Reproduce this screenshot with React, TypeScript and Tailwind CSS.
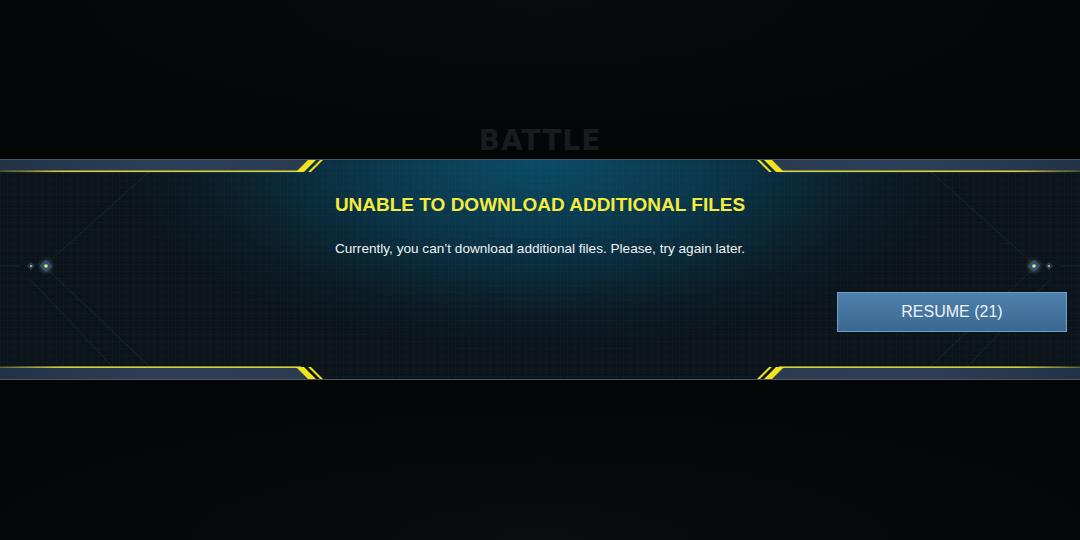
function PanelFrame() {
  return (
    <svg className="absolute inset-0 h-full w-full" viewBox="0 0 1080 221" preserveAspectRatio="none">
      <defs>
        <linearGradient id="bandL" x1="0" x2="1" y1="0" y2="0">
          <stop offset="0" stopColor="#223247" />
          <stop offset="0.5" stopColor="#2d3f57" />
          <stop offset="1" stopColor="#2a3b52" />
        </linearGradient>
        <linearGradient id="bandR" x1="1" x2="0" y1="0" y2="0">
          <stop offset="0" stopColor="#223247" />
          <stop offset="0.5" stopColor="#2d3f57" />
          <stop offset="1" stopColor="#2a3b52" />
        </linearGradient>
        <linearGradient id="lineL" x1="0" x2="1" y1="0" y2="0">
          <stop offset="0" stopColor="#c9c640" stopOpacity="0.35" />
          <stop offset="0.2" stopColor="#d3cf3c" />
          <stop offset="1" stopColor="#d9d43a" />
        </linearGradient>
        <linearGradient id="lineR" x1="1" x2="0" y1="0" y2="0">
          <stop offset="0" stopColor="#c9c640" stopOpacity="0.35" />
          <stop offset="0.2" stopColor="#d3cf3c" />
          <stop offset="1" stopColor="#d9d43a" />
        </linearGradient>
        <radialGradient id="glow">
          <stop offset="0" stopColor="#d8ff80" stopOpacity="0.5" />
          <stop offset="1" stopColor="#5070a0" stopOpacity="0" />
        </radialGradient>
      </defs>

      {/* faint circuit lines */}
      <g stroke="#7fa6bd" strokeOpacity="0.11" strokeWidth="1" fill="none">
        <path d="M150 12 L44 107 L150 208" />
        <path d="M930 12 L1036 107 L930 208" />
        <path d="M0 107 L20 107" />
        <path d="M1060 107 L1080 107" />
        <path d="M1050 120 L955 221" />
        <path d="M30 120 L125 221" />
      </g>

      {/* top edge */}
      <line x1="0" y1="0.5" x2="1080" y2="0.5" stroke="#3f5866" strokeWidth="1" />
      {/* bottom edge */}
      <line x1="0" y1="220.5" x2="1080" y2="220.5" stroke="#4b5862" strokeWidth="1" />

      {/* top-left */}
      <polygon points="0,1 311,1 300,12 0,12" fill="url(#bandL)" />
      <rect x="0" y="11.5" width="301" height="1.6" fill="url(#lineL)" />
      <polygon points="296,13 304,13 316,1 308,1" fill="#f1e31c" />
      <polygon points="308,13 311,13 323,1 320,1" fill="#e8dc24" />

      {/* top-right */}
      <polygon points="1080,1 769,1 780,12 1080,12" fill="url(#bandR)" />
      <rect x="779" y="11.5" width="301" height="1.6" fill="url(#lineR)" />
      <polygon points="784,13 776,13 764,1 772,1" fill="#f1e31c" />
      <polygon points="772,13 769,13 757,1 760,1" fill="#e8dc24" />

      {/* bottom-left */}
      <polygon points="0,208 300,208 311,220 0,220" fill="url(#bandL)" />
      <rect x="0" y="207.4" width="301" height="1.6" fill="url(#lineL)" />
      <polygon points="296,208 304,208 316,220 308,220" fill="#f1e31c" />
      <polygon points="308,208 311,208 323,220 320,220" fill="#e8dc24" />

      {/* bottom-right */}
      <polygon points="1080,208 780,208 769,220 1080,220" fill="url(#bandR)" />
      <rect x="779" y="207.4" width="301" height="1.6" fill="url(#lineR)" />
      <polygon points="784,208 776,208 764,220 772,220" fill="#f1e31c" />
      <polygon points="772,208 769,208 757,220 760,220" fill="#e8dc24" />

      {/* diamonds left */}
      <circle cx="46" cy="107" r="9" fill="url(#glow)" />
      <polygon points="31,103 35,107 31,111 27,107" fill="#34496a" fillOpacity="0.7" />
      <circle cx="31" cy="107" r="1" fill="#c9d2a0" />
      <polygon points="46,101 52,107 46,113 40,107" fill="#34507a" />
      <circle cx="46" cy="107" r="1.8" fill="#e6ea6a" />

      {/* diamonds right */}
      <circle cx="1034" cy="107" r="9" fill="url(#glow)" />
      <polygon points="1034,101 1040,107 1034,113 1028,107" fill="#34507a" />
      <circle cx="1034" cy="107" r="1.8" fill="#e6ea6a" />
      <polygon points="1049,103 1053,107 1049,111 1045,107" fill="#34496a" fillOpacity="0.7" />
      <circle cx="1049" cy="107" r="1" fill="#c9d2a0" />
    </svg>
  )
}

export default function App() {
  return (
    <div className="flex h-[540px] w-[1080px] flex-col overflow-hidden bg-[radial-gradient(ellipse_700px_160px_at_50%_100%,#0a0c0e_0%,#040506_100%)] font-['Liberation_Sans',Arial,sans-serif]">
      {/* header area with faded logo */}
      <div className="flex h-[159px] items-end justify-center bg-[radial-gradient(ellipse_600px_160px_at_50%_0%,#090b0d_0%,#040506_100%)] pb-[4px]">
        <span className="font-['DejaVu_Sans',sans-serif] text-[28px] font-bold leading-none tracking-[1px] text-[#191b1e]">
          BATTLE
        </span>
      </div>

      {/* dialog panel */}
      <div className="relative h-[221px] w-full bg-[radial-gradient(ellipse_420px_190px_at_50%_0%,#0b4b66_0%,#0a3447_45%,#0b1c26_80%,#0b141a_100%)]">
        <div className="absolute inset-0 bg-[linear-gradient(rgba(140,190,210,0.025)_1px,transparent_1px),linear-gradient(90deg,rgba(140,190,210,0.025)_1px,transparent_1px)] bg-[size:7px_7px]" />
        <PanelFrame />

        <div className="relative flex h-full flex-col items-center pt-[35px]">
          <h1 className="text-[19px] font-bold leading-[22px] text-[#f3ec3f]">
            UNABLE TO DOWNLOAD ADDITIONAL FILES
          </h1>
          <p className="mt-[25px] text-[13.6px] leading-[16px] text-[#eef2f4]">
            Currently, you can’t download additional files. Please, try again later.
          </p>

          <div className="mt-[35px] flex w-full justify-end pr-[13px]">
            <button className="flex h-[40px] w-[230px] items-center justify-center border border-[#6f9fc8] bg-[linear-gradient(#4d80ab,#3b6893)] text-[16px] text-[#eef3f8]">
              RESUME (21)
            </button>
          </div>
        </div>
      </div>

      <div className="flex-1" />
    </div>
  )
}
